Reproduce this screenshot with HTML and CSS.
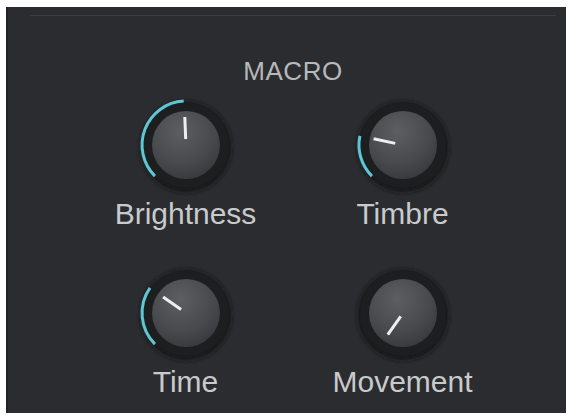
FILE: index.html
```html
<!DOCTYPE html>
<html lang="en">
<head>
<meta charset="utf-8">
<title>Macro</title>
<link rel="stylesheet" href="styles.css">
</head>
<body>
<div class="panel">
  <div class="topline"></div>
  <div class="title">MACRO</div>
  <div class="grid">
    <div class="macro">
      <svg class="knob" viewBox="0 0 100 100" width="100" height="100">
        <defs>
          <radialGradient id="body1" cx="0.42" cy="0.3" r="0.8">
            <stop offset="0" stop-color="#5d5e62"/>
            <stop offset="0.6" stop-color="#48494d"/>
            <stop offset="1" stop-color="#343538"/>
          </radialGradient>
          <filter id="soft1" x="-30%" y="-30%" width="160%" height="160%"><feGaussianBlur stdDeviation="2.5"/></filter>
        </defs>
        <circle cx="50" cy="52" r="45" fill="#151618" filter="url(#soft1)"/>
        <circle cx="50" cy="50" r="43" fill="#1d1e20"/>
        <circle cx="50" cy="50" r="34" fill="url(#body1)"/>
        <path d="M18.9 81.1 A44 44 0 0 1 47.7 6.1" fill="none" stroke="#5ec7d5" stroke-width="3"/>
        <line x1="49.7" y1="44" x2="48.8" y2="22" stroke="#eeeeee" stroke-width="3"/>
      </svg>
      <span class="label">Brightness</span>
    </div>
    <div class="macro">
      <svg class="knob" viewBox="0 0 100 100" width="100" height="100">
        <defs>
          <radialGradient id="body2" cx="0.42" cy="0.3" r="0.8">
            <stop offset="0" stop-color="#5d5e62"/>
            <stop offset="0.6" stop-color="#48494d"/>
            <stop offset="1" stop-color="#343538"/>
          </radialGradient>
          <filter id="soft2" x="-30%" y="-30%" width="160%" height="160%"><feGaussianBlur stdDeviation="2.5"/></filter>
        </defs>
        <circle cx="50" cy="52" r="45" fill="#151618" filter="url(#soft2)"/>
        <circle cx="50" cy="50" r="43" fill="#1d1e20"/>
        <circle cx="50" cy="50" r="34" fill="url(#body2)"/>
        <path d="M18.9 81.1 A44 44 0 0 1 6.9 40.9" fill="none" stroke="#5ec7d5" stroke-width="3"/>
        <line x1="42.2" y1="48.4" x2="20.6" y2="43.8" stroke="#eeeeee" stroke-width="3"/>
      </svg>
      <span class="label">Timbre</span>
    </div>
    <div class="macro">
      <svg class="knob" viewBox="0 0 100 100" width="100" height="100">
        <defs>
          <radialGradient id="body3" cx="0.42" cy="0.3" r="0.8">
            <stop offset="0" stop-color="#5d5e62"/>
            <stop offset="0.6" stop-color="#48494d"/>
            <stop offset="1" stop-color="#343538"/>
          </radialGradient>
          <filter id="soft3" x="-30%" y="-30%" width="160%" height="160%"><feGaussianBlur stdDeviation="2.5"/></filter>
        </defs>
        <circle cx="50" cy="52" r="45" fill="#151618" filter="url(#soft3)"/>
        <circle cx="50" cy="50" r="43" fill="#1d1e20"/>
        <circle cx="50" cy="50" r="34" fill="url(#body3)"/>
        <path d="M18.9 81.1 A44 44 0 0 1 14.0 24.8" fill="none" stroke="#5ec7d5" stroke-width="3"/>
        <line x1="45.1" y1="46.6" x2="27.1" y2="33.9" stroke="#eeeeee" stroke-width="3"/>
      </svg>
      <span class="label">Time</span>
    </div>
    <div class="macro">
      <svg class="knob" viewBox="0 0 100 100" width="100" height="100">
        <defs>
          <radialGradient id="body4" cx="0.42" cy="0.3" r="0.8">
            <stop offset="0" stop-color="#5d5e62"/>
            <stop offset="0.6" stop-color="#48494d"/>
            <stop offset="1" stop-color="#343538"/>
          </radialGradient>
          <filter id="soft4" x="-30%" y="-30%" width="160%" height="160%"><feGaussianBlur stdDeviation="2.5"/></filter>
        </defs>
        <circle cx="50" cy="52" r="45" fill="#151618" filter="url(#soft4)"/>
        <circle cx="50" cy="50" r="43" fill="#1d1e20"/>
        <circle cx="50" cy="50" r="34" fill="url(#body4)"/>
        <line x1="47.7" y1="53.3" x2="34.8" y2="71.7" stroke="#eeeeee" stroke-width="3"/>
      </svg>
      <span class="label">Movement</span>
    </div>
  </div>
</div>
</body>
</html>
```

FILE: styles.css
```css
html, body {
  margin: 0;
  padding: 0;
  background: #ffffff;
}

body {
  font-family: "Liberation Sans", Arial, sans-serif;
}

.panel {
  box-sizing: border-box;
  margin: 7px 0 0 6px;
  width: 560px;
  height: 406px;
  background: #2a2c2f;
  border-left: 2px solid #222325;
  display: flex;
  flex-direction: column;
}

.topline {
  height: 1px;
  margin: 8px 10px 0 22px;
  background: #3b3d40;
}

.title {
  margin-top: 40px;
  height: 30px;
  line-height: 30px;
  font-size: 26px;
  letter-spacing: 0.5px;
  color: #b7b8ba;
  text-align: center;
  padding-left: 12px;
}

.grid {
  margin-top: 9px;
  padding-left: 69px;
  display: grid;
  grid-template-columns: 217px 217px;
  row-gap: 32px;
}

.macro {
  display: flex;
  flex-direction: column;
  align-items: center;
}

.knob {
  display: block;
  overflow: visible;
}

.label {
  margin-top: 2px;
  height: 34px;
  line-height: 34px;
  font-size: 30px;
  color: #c9cacc;
}
```
